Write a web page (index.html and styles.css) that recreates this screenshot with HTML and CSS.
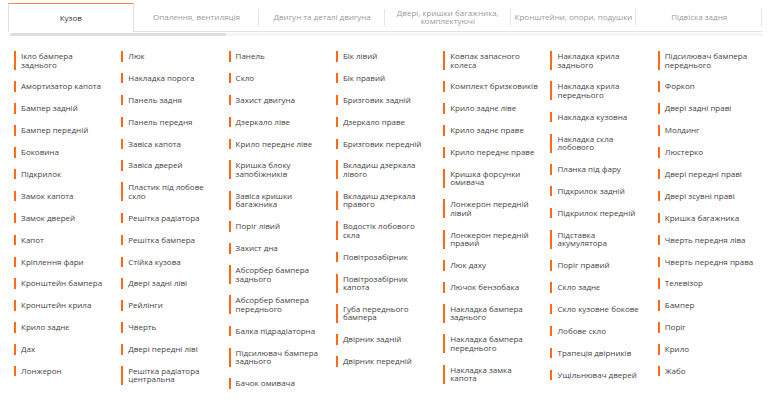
FILE: index.html
```html
<!DOCTYPE html>
<html lang="uk">
<head>
    <meta charset="UTF-8">
    <meta name="viewport" content="width=device-width, initial-scale=1.0">
    <title>Кузов</title>
    <link rel="stylesheet" href="styles.css">
</head>
<body>
    <div class="tabs">
        <div class="tab active">Кузов</div>
        <div class="tab">Опалення, вентиляція</div>
        <div class="tab">Двигун та деталі двигуна</div>
        <div class="tab">Двері, кришки багажника, комплектуючі</div>
        <div class="tab">Кронштейни, опори, подушки</div>
        <div class="tab">Підвіска задня</div>
    </div>
    <div class="scroll-track"><div class="scroll-thumb"></div></div>

    <div class="parts" id="parts"></div>

    <script>
        const columns = [
            ['Ікло бампера заднього', 'Амортизатор капота', 'Бампер задній', 'Бампер передній', 'Боковина', 'Підкрилок', 'Замок капота', 'Замок дверей', 'Капот', 'Кріплення фари', 'Кронштейн бампера', 'Кронштейн крила', 'Крило заднє', 'Дах', 'Лонжерон'],
            ['Люк', 'Накладка порога', 'Панель задня', 'Панель передня', 'Завіса капота', 'Завіса дверей', 'Пластик під лобове скло', 'Решітка радіатора', 'Решітка бампера', 'Стійка кузова', 'Двері задні ліві', 'Рейлінги', 'Чверть', 'Двері передні ліві', 'Решітка радіатора центральна'],
            ['Панель', 'Скло', 'Захист двигуна', 'Дзеркало ліве', 'Крило переднє ліве', 'Кришка блоку запобіжників', 'Завіса кришки багажника', 'Поріг лівий', 'Захист дна', 'Абсорбер бампера заднього', 'Абсорбер бампера переднього', 'Балка підрадіаторна', 'Підсилювач бампера заднього', 'Бачок омивача'],
            ['Бік лівий', 'Бік правий', 'Бризговик задній', 'Дзеркало праве', 'Бризговик передній', 'Вкладиш дзеркала лівого', 'Вкладиш дзеркала правого', 'Водостік лобового скла', 'Повітрозабірник', 'Повітрозабірник капота', 'Губа переднього бампера', 'Двірник задній', 'Двірник передній'],
            ['Ковпак запасного колеса', 'Комплект бризковиків', 'Крило заднє ліве', 'Крило заднє праве', 'Крило переднє праве', 'Кришка форсунки омивача', 'Лонжерон передній лівий', 'Лонжерон передній правий', 'Люк даху', 'Лючок бензобака', 'Накладка бампера заднього', 'Накладка бампера переднього', 'Накладка замка капота'],
            ['Накладка крила заднього', 'Накладка крила переднього', 'Накладка кузовна', 'Накладка скла лобового', 'Планка під фару', 'Підкрилок задній', 'Підкрилок передній', 'Підставка акумулятора', 'Поріг правий', 'Скло заднє', 'Скло кузовне бокове', 'Лобове скло', 'Трапеція двірників', 'Ущільнювач дверей'],
            ['Підсилювач бампера переднього', 'Форкоп', 'Двері задні праві', 'Молдинг', 'Люстерко', 'Двері передні праві', 'Двері зсувні праві', 'Кришка багажника', 'Чверть передня ліва', 'Чверть передня права', 'Телевізор', 'Бампер', 'Поріг', 'Крило', 'Жабо']
        ];

        const parts = document.getElementById('parts');
        columns.forEach(col => {
            const ul = document.createElement('ul');
            ul.className = 'part-col';
            col.forEach(name => {
                const li = document.createElement('li');
                li.innerHTML = `<span class="part-link">${name}</span>`;
                ul.appendChild(li);
            });
            parts.appendChild(ul);
        });
    </script>
</body>
</html>
```

FILE: styles.css
```css
body {
    margin: 0;
    font-family: 'Open Sans', 'Noto Sans', Arial, sans-serif;
    background: #fff;
    color: #444;
}
.tabs {
    display: grid;
    grid-template-columns: repeat(6, 1fr);
    width: 754px;
    margin: 3px 0 0 8px;
    border-bottom: 1px solid #e2e2e2;
    height: 28px;
}
.tab {
    display: flex;
    align-items: center;
    justify-content: center;
    text-align: center;
    font-size: 8px;
    line-height: 8px;
    color: #9a9a9a;
    position: relative;
    padding: 0 3px;
}
.tab:nth-child(4) {
    padding: 0 8px;
}
.tab:not(.active)::after {
    content: '';
    position: absolute;
    right: 0;
    top: 6px;
    bottom: 5px;
    width: 1px;
    background: #e4e4e4;
}
.tab.active {
    color: #3a3a3a;
    background: #fff;
    border-top: 1px solid #f5864a;
    border-left: 1px solid #e2e2e2;
    border-right: 1px solid #e2e2e2;
    margin-bottom: -1px;
}
.scroll-track {
    width: 752px;
    margin-left: 10px;
    height: 3px;
    margin-top: 1px;
    background: #f4f4f4;
}
.scroll-thumb {
    width: 216px;
    height: 3px;
    background: #dedede;
    border-radius: 2px;
}
.parts {
    display: grid;
    grid-template-columns: repeat(7, 107.3px);
    padding-left: 14px;
    margin-top: 15px;
}
.part-col {
    list-style: none;
    margin: 0;
    padding: 0;
    display: flex;
    flex-direction: column;
    align-items: flex-start;
    gap: 11.4px;
}
.part-link {
    display: block;
    max-width: 88.8px;
    border-left: 2px solid #ff6a14;
    padding: 1px 0 1px 5px;
    font-size: 8px;
    line-height: 8.5px;
    color: #444;
}
```
